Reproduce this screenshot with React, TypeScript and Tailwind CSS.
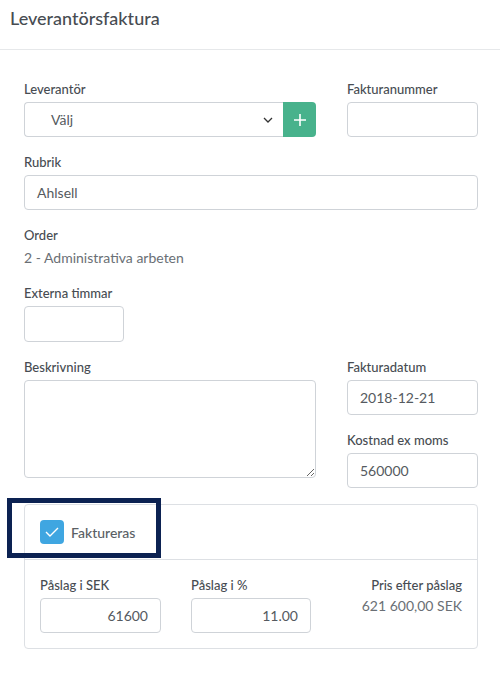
import React from "react";

const font = { fontFamily: "Lato, 'Liberation Sans', sans-serif" };

function Label({ children }: { children: React.ReactNode }) {
  return <div className="text-[13px] leading-[18px] font-medium text-[#474c52] mb-[4px]">{children}</div>;
}

export default function App() {
  return (
    <div className="w-[500px] h-[680px] bg-white" style={font}>
      <div className="h-[50px] border-b border-[#e6e8ea] px-[10px] flex items-center">
        <h1 className="text-[18px] leading-[24px] font-medium text-[#474c52] -mt-[14px]">Leverantörsfaktura</h1>
      </div>
      <div className="pl-[24px] pr-[22px] pt-[30px]">
        <div className="flex gap-[31px]">
          <div className="w-[292px]">
            <Label>Leverantör</Label>
            <div className="flex h-[35px]">
              <div className="flex-1 flex items-center border border-[#cfd3d8] border-r-0 rounded-l-[4px] pl-[26px] pr-[10px] text-[14px] text-[#555a60]">
                <span className="flex-1">Välj</span>
                <svg width="10" height="6" viewBox="0 0 10 6" className="mr-[0px]">
                  <path d="M1 1 L5 5 L9 1" fill="none" stroke="#333" strokeWidth="1.3" />
                </svg>
              </div>
              <div className="w-[33px] bg-[#48b28c] rounded-r-[4px] flex items-center justify-center">
                <svg width="14" height="14" viewBox="0 0 14 14">
                  <path d="M7 1 V13 M1 7 H13" stroke="white" strokeWidth="1.6" />
                </svg>
              </div>
            </div>
          </div>
          <div className="w-[131px]">
            <Label>Fakturanummer</Label>
            <div className="h-[35px] border border-[#cfd3d8] rounded-[4px]" />
          </div>
        </div>

        <div className="mt-[16px]">
          <Label>Rubrik</Label>
          <div className="h-[35px] border border-[#cfd3d8] rounded-[4px] flex items-center px-[12px] text-[14px] text-[#555a60]">Ahlsell</div>
        </div>

        <div className="mt-[16px]">
          <Label>Order</Label>
          <div className="text-[14px] leading-[20px] text-[#6a6f75] mt-[2px]">2 - Administrativa arbeten</div>
        </div>

        <div className="mt-[16px]">
          <Label>Externa timmar</Label>
          <div className="w-[100px] h-[36px] border border-[#cfd3d8] rounded-[4px]" />
        </div>

        <div className="mt-[16px] flex gap-[31px]">
          <div className="w-[292px]">
            <Label>Beskrivning</Label>
            <textarea className="block w-full h-[98px] border border-[#cfd3d8] rounded-[4px] resize-y outline-none" />
          </div>
          <div className="w-[131px]">
            <Label>Fakturadatum</Label>
            <div className="h-[35px] border border-[#cfd3d8] rounded-[4px] flex items-center px-[12px] text-[14px] text-[#555a60]">2018-12-21</div>
            <div className="mt-[16px]">
              <Label>Kostnad ex moms</Label>
              <div className="h-[35px] border border-[#cfd3d8] rounded-[4px] flex items-center px-[12px] text-[14px] text-[#555a60]">560000</div>
            </div>
          </div>
        </div>

        <div className="relative mt-[16px] border border-[#dde0e4] rounded-[4px]">
          <div className="h-[55px] border-b border-[#dde0e4] flex items-center px-[15px] gap-[7px]">
            <div className="w-[24px] h-[24px] rounded-[4px] bg-[#3fa6e1] flex items-center justify-center">
              <svg width="14" height="10" viewBox="0 0 14 10">
                <path d="M1 5 L5 9 L13 1" fill="none" stroke="white" strokeWidth="1.4" />
              </svg>
            </div>
            <span className="text-[14px] font-medium text-[#5a5f65]">Faktureras</span>
          </div>
          <div className="flex px-[15px] pt-[16px] pb-[15px]">
            <div className="w-[121px]">
              <Label>Påslag i SEK</Label>
              <div className="h-[35px] border border-[#cfd3d8] rounded-[4px] flex items-center justify-end px-[12px] text-[14px] text-[#555a60]">61600</div>
            </div>
            <div className="w-[120px] ml-[30px]">
              <Label>Påslag i %</Label>
              <div className="h-[35px] border border-[#cfd3d8] rounded-[4px] flex items-center justify-end px-[12px] text-[14px] text-[#555a60]">11.00</div>
            </div>
            <div className="flex-1 text-right">
              <Label>Pris efter påslag</Label>
              <div className="text-[14px] leading-[20px] text-[#6a6f75] -mt-[2px]">621 600,00 SEK</div>
            </div>
          </div>
          <div className="absolute left-[-18px] top-[-7px] w-[154px] h-[60px] border-[5px] border-[#0c2252] pointer-events-none" />
        </div>
      </div>
    </div>
  );
}
